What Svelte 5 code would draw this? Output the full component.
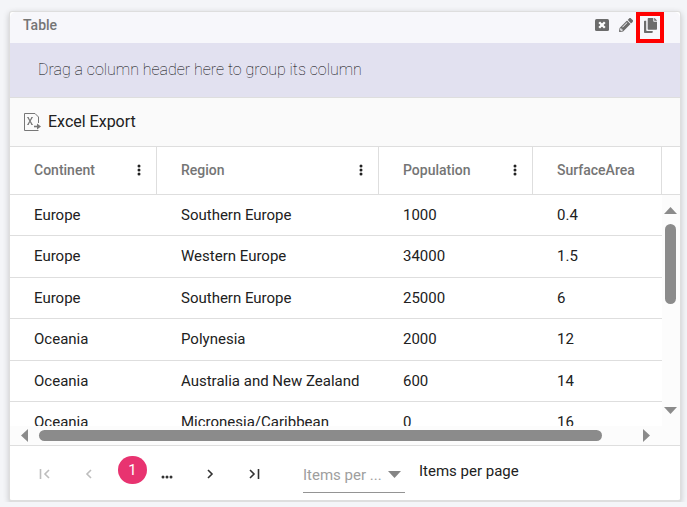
<script>
  const columns = [
    { name: 'Continent', width: 147, menu: true },
    { name: 'Region', width: 222, menu: true },
    { name: 'Population', width: 154, menu: true },
    { name: 'SurfaceArea', width: null, menu: false }
  ];
  const rows = [
    ['Europe', 'Southern Europe', '1000', '0.4'],
    ['Europe', 'Western Europe', '34000', '1.5'],
    ['Europe', 'Southern Europe', '25000', '6'],
    ['Oceania', 'Polynesia', '2000', '12'],
    ['Oceania', 'Australia and New Zealand', '600', '14'],
    ['Oceania', 'Micronesia/Caribbean', '0', '16']
  ];
</script>

<main class="card">
  <header class="title-bar">
    <h1>Table</h1>
    <div class="tools">
      <button class="tool" aria-label="Remove">
        <svg width="14" height="12" viewBox="0 0 14 12">
          <rect width="14" height="12" rx="1.5" fill="currentColor" />
          <path d="M4.2 3.2l5.6 5.6M9.8 3.2l-5.6 5.6" stroke="#fff" stroke-width="2.3" />
        </svg>
      </button>
      <button class="tool" aria-label="Edit">
        <svg width="14" height="14" viewBox="0 0 512 512" fill="currentColor">
          <path d="M498 142l-47 46c-5 5-12 5-17 0L324 77c-5-5-5-12 0-17l46-46c19-19 49-19 68 0l60 60c19 19 19 49 0 68zm-214-42L22 362 0 484c-3 16 12 30 28 28l122-22 262-262c5-5 5-12 0-17L302 100c-5-5-13-5-18 0zM124 340c-5-6-5-14 0-20l154-154c6-5 14-5 20 0s5 14 0 20L144 340c-6 5-14 5-20 0zm-36 84h48v36l-64 12-32-31 12-65h36v48z" />
        </svg>
      </button>
      <button class="tool marked" aria-label="Copy">
        <svg width="13" height="15" viewBox="0 0 448 512" fill="currentColor">
          <path d="M300 448v40c0 13-11 24-24 24H24c-13 0-24-11-24-24V120c0-13 11-24 24-24h52v312c0 22 18 40 40 40h184zm20-344V0H152c-13 0-24 11-24 24v352c0 13 11 24 24 24h272c13 0 24-11 24-24V128H344c-13 0-24-11-24-24zm121-31L375 7c-4-4-11-7-17-7h-6v96h96v-6c0-6-3-12-7-17z" />
        </svg>
      </button>
    </div>
  </header>

  <div class="group-area">Drag a column header here to group its column</div>

  <div class="toolbar">
    <button class="export">
      <svg width="17" height="18" viewBox="0 0 17 18" fill="none" stroke="#777">
        <path d="M14.5 10V4L11 .5H.5v17h14" />
        <path d="M4 4.5l4 7M8 4.5l-4 7" stroke-width="1.3" />
        <path d="M3 4.5h2M7 4.5h2M3 11.5h2M7 11.5h2" stroke-width=".7" />
        <path d="M10 13.5h4" stroke-width="1.6" />
        <path d="M13 10.5l4 3-4 3z" fill="#777" stroke="none" />
      </svg>
      Excel Export
    </button>
  </div>

  <div class="grid">
    <div class="viewport">
      <table>
        <colgroup>
          {#each columns as column}
            <col style:width={column.width ? `${column.width}px` : null} />
          {/each}
        </colgroup>
        <thead>
          <tr>
            {#each columns as column}
              <th scope="col">
                <div class="head-cell">
                  {column.name}
                  {#if column.menu}
                    <button class="menu" aria-label="{column.name} column menu">
                      <svg width="4" height="12" viewBox="0 0 4 12" fill="#212121">
                        <circle cx="2" cy="2" r="1.5" /><circle cx="2" cy="6" r="1.5" /><circle cx="2" cy="10" r="1.5" />
                      </svg>
                    </button>
                  {/if}
                </div>
              </th>
            {/each}
          </tr>
        </thead>
        <tbody>
          {#each rows as row}
            <tr>
              {#each row as value}<td>{value}</td>{/each}
            </tr>
          {/each}
        </tbody>
      </table>
    </div>
    <div class="side">
      <div class="corner"></div>
      <div class="v-scroll">
        <svg width="13" height="7" viewBox="0 0 13 7"><path d="M6.5 0L13 7H0z" fill="#8b8b8b" /></svg>
        <div class="v-track"><div class="v-thumb"></div></div>
        <svg width="13" height="7" viewBox="0 0 13 7"><path d="M0 0h13L6.5 7z" fill="#8b8b8b" /></svg>
      </div>
    </div>
  </div>

  <div class="h-scroll">
    <svg width="7" height="13" viewBox="0 0 7 13"><path d="M7 0v13L0 6.5z" fill="#8b8b8b" /></svg>
    <div class="h-track"><div class="h-thumb"></div></div>
    <svg width="7" height="13" viewBox="0 0 7 13"><path d="M0 0v13l7-6.5z" fill="#8b8b8b" /></svg>
  </div>

  <footer class="pager">
    <nav aria-label="Pages">
      <button class="step" disabled aria-label="First page">
        <svg width="12" height="12" viewBox="0 0 12 12"><path d="M1.5 1v10M10 2L6 6l4 4" /></svg>
      </button>
      <button class="step" disabled aria-label="Previous page">
        <svg width="12" height="12" viewBox="0 0 12 12"><path d="M8 2L4 6l4 4" /></svg>
      </button>
      <button class="page" aria-current="page">1</button>
      <button class="more" aria-label="More pages">
        <svg width="12" height="4" viewBox="0 0 12 4" fill="#333"><circle cx="2" cy="2" r="1.5" /><circle cx="6" cy="2" r="1.5" /><circle cx="10" cy="2" r="1.5" /></svg>
      </button>
      <button class="step" aria-label="Next page">
        <svg width="12" height="12" viewBox="0 0 12 12"><path d="M4 2l4 4-4 4" /></svg>
      </button>
      <button class="step" aria-label="Last page">
        <svg width="12" height="12" viewBox="0 0 12 12"><path d="M2 2l4 4-4 4M10.5 1v10" /></svg>
      </button>
    </nav>
    <div class="select-box">
      <select id="page-size"><option>Items per ...</option></select>
      <svg width="13" height="7" viewBox="0 0 13 7"><path d="M0 0h13L6.5 7z" fill="#858585" /></svg>
    </div>
    <label for="page-size">Items per page</label>
  </footer>
</main>

<style>
  :global(body) {
    background: #f4f5f8;
    font-family: Roboto, sans-serif;
    color: #212121;
  }
  button {
    display: flex;
    align-items: center;
    justify-content: center;
    padding: 0;
    border: 0;
    background: none;
    font: inherit;
    color: inherit;
  }
  svg {
    display: block;
    flex: none;
  }
  .card {
    margin: 11px 6px 0 9px;
    border: 1px solid #dedede;
    border-bottom-width: 2px;
    border-radius: 3px;
    background: #fff;
    box-shadow: 0 2px 6px rgba(0, 0, 0, 0.2);
  }
  .title-bar {
    display: flex;
    justify-content: space-between;
    height: 31px;
    padding: 0 16px 0 13px;
    background: #f7f7fb;
    border-radius: 6px 6px 0 0;
  }
  h1 {
    margin: 0;
    font-size: 14px;
    line-height: 26px;
    font-weight: 500;
    color: #757575;
  }
  .tools {
    display: flex;
    gap: 4px;
    color: #6c6c6c;
  }
  .tool {
    width: 20px;
    height: 26px;
  }
  .tool.marked {
    box-sizing: border-box;
    width: 28px;
    height: 31px;
    margin-left: -4px;
    padding-bottom: 4px;
    border: 4px solid #f00;
  }
  .group-area {
    padding: 0 28px;
    font-size: 16px;
    line-height: 54px;
    font-weight: 100;
    color: #000;
    background: #e2e1f0;
    border-bottom: 1px solid #dedede;
  }
  .toolbar {
    display: flex;
    height: 48px;
    padding: 0 14px;
    background: #fafafa;
    border-bottom: 1px solid #dedede;
  }
  .export {
    gap: 7px;
    padding-bottom: 1px;
    font-size: 16px;
  }
  .grid {
    display: grid;
    grid-template-columns: minmax(0, 1fr) 18px;
    height: 279px;
  }
  .viewport {
    overflow: hidden;
  }
  table {
    width: 100%;
    table-layout: fixed;
    border-collapse: separate;
    border-spacing: 0;
  }
  th,
  td {
    box-sizing: border-box;
    padding: 0 0 0 24px;
    border-bottom: 1px solid #dedede;
    text-align: left;
    white-space: nowrap;
  }
  th {
    height: 48px;
    padding-bottom: 2px;
    border-right: 1px solid #dedede;
    font-size: 14px;
    font-weight: 500;
    color: #757575;
  }
  .head-cell {
    display: flex;
    align-items: center;
    justify-content: space-between;
    padding-right: 10px;
  }
  .menu {
    width: 14px;
    height: 20px;
  }
  td {
    height: 41px;
    font-size: 15px;
  }
  tbody tr:nth-child(even) td {
    height: 42px;
    padding-bottom: 2px;
  }
  .side {
    display: flex;
    flex-direction: column;
  }
  .corner {
    height: 47px;
    border-bottom: 1px solid #dedede;
  }
  .v-scroll {
    display: flex;
    flex: 1;
    flex-direction: column;
    align-items: center;
    gap: 10px;
    padding: 12px 1px 12px 0;
    background: #fcfcfc;
  }
  .v-track {
    flex: 1;
  }
  .v-thumb {
    width: 11px;
    height: 80px;
    border-radius: 6px;
    background: #8b8b8b;
  }
  .h-scroll {
    display: flex;
    align-items: center;
    gap: 11px;
    height: 19px;
    padding: 0 30px 0 11px;
    background: #fcfcfc;
    border-bottom: 1px solid #dedede;
  }
  .h-track {
    flex: 1;
  }
  .h-thumb {
    width: 95%;
    height: 11px;
    border-radius: 6px;
    background: #8b8b8b;
  }
  .pager {
    display: flex;
    height: 54px;
    font-size: 15px;
  }
  nav {
    display: flex;
    padding-left: 13px;
  }
  .step {
    width: 44px;
    height: 56px;
  }
  .step path {
    fill: none;
    stroke: #333;
    stroke-width: 1.6;
  }
  .step:disabled path {
    stroke: #bdbdbd;
  }
  .page {
    width: 29px;
    height: 28px;
    margin: 10px 7px 0;
    border-radius: 14px;
    background: #e83370;
    color: #fff;
  }
  .more {
    width: 26px;
    height: 62px;
    margin-right: 8px;
  }
  .select-box {
    display: flex;
    align-items: center;
    box-sizing: border-box;
    width: 102px;
    height: 34px;
    margin: 13px 14px 0 27px;
    padding-bottom: 2px;
    border-bottom: 1px solid #949494;
  }
  select {
    flex: 1;
    min-width: 0;
    padding: 0;
    border: 0;
    appearance: none;
    background: none;
    font: inherit;
    color: #9e9e9e;
  }
  .select-box svg {
    margin-right: 4px;
    pointer-events: none;
  }
  label {
    line-height: 50px;
  }
</style>
